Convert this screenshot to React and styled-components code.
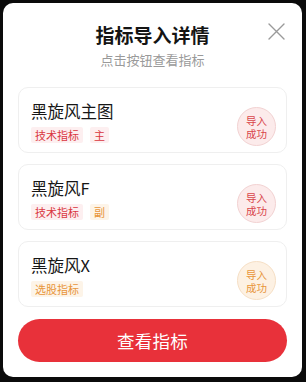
import React from "react";
import styled, { createGlobalStyle } from "styled-components";

const Global = createGlobalStyle`
  html, body { margin: 0; padding: 0; background: #0b0b0b; }
  body { font-family: "Noto Sans CJK SC", "Noto Sans", sans-serif; }
  #root { width: 306px; height: 382px; }
`;

const Screen = styled.div`
  width: 306px;
  height: 382px;
  box-sizing: border-box;
  padding: 3px 4px 5px 3px;
  background: #0b0b0b;
`;

const Modal = styled.div`
  position: relative;
  height: 100%;
  box-sizing: border-box;
  background: #ffffff;
  border-radius: 10px;
  padding: 20px 15px 15px 15px;
  display: flex;
  flex-direction: column;
`;

const Header = styled.div`
  display: flex;
  flex-direction: column;
  align-items: center;
  margin-bottom: 19px;
`;

const Title = styled.div`
  font-size: 19px;
  line-height: 24px;
  font-weight: 700;
  color: #141414;
`;

const Subtitle = styled.div`
  margin-top: 4px;
  font-size: 13px;
  line-height: 17px;
  color: #9a9a9a;
`;

const Close = styled.button`
  position: absolute;
  top: 19px;
  right: 17px;
  width: 18px;
  height: 18px;
  padding: 0;
  border: none;
  background: none;
  display: flex;
  align-items: center;
  justify-content: center;
`;

const List = styled.div`
  display: flex;
  flex-direction: column;
  gap: 11px;
  flex: 1;
`;

const Card = styled.div`
  height: 66px;
  box-sizing: border-box;
  border: 1px solid #efefef;
  border-radius: 10px;
  padding: 0 10px 0 12px;
  display: flex;
  justify-content: space-between;
`;

const Info = styled.div`
  display: flex;
  flex-direction: column;
  padding-top: 12px;
`;

const Name = styled.div`
  font-size: 16.5px;
  line-height: 22px;
  color: #161616;
`;

const Tags = styled.div`
  display: flex;
  gap: 7px;
  margin-top: 5px;
`;

const Tag = styled.span`
  font-size: 11px;
  line-height: 16px;
  padding: 0 4px;
  border-radius: 2px;
  color: ${(p) => (p.$tone === "orange" ? "#e8953a" : "#d9363e")};
  background: ${(p) => (p.$tone === "orange" ? "#fdf4e8" : "#fdeff0")};
`;

const Stamp = styled.div`
  margin-top: 19px;
  width: 39px;
  height: 39px;
  border-radius: 50%;
  box-sizing: border-box;
  display: flex;
  align-items: center;
  justify-content: center;
  color: ${(p) => (p.$tone === "orange" ? "#e8953a" : "#d9454a")};
  background: ${(p) => (p.$tone === "orange" ? "#fdf1e3" : "#fcebeb")};
  border: 1px solid ${(p) => (p.$tone === "orange" ? "#f6dfc5" : "#f2d2d2")};
`;

const StampText = styled.span`
  width: 22px;
  font-size: 10.5px;
  line-height: 13px;
  text-align: center;
  word-break: break-all;
`;

const Action = styled.button`
  margin-top: 11px;
  height: 43px;
  width: 100%;
  border: none;
  border-radius: 22px;
  background: #e8313a;
  color: #ffffff;
  font-family: "Noto Sans CJK SC", "Noto Sans", sans-serif;
  font-size: 17.5px;
  letter-spacing: 0.3px;
`;

const items = [
  { name: "黑旋风主图", tags: [{ t: "技术指标", c: "red" }, { t: "主", c: "red" }], tone: "red" },
  { name: "黑旋风F", tags: [{ t: "技术指标", c: "red" }, { t: "副", c: "orange" }], tone: "red" },
  { name: "黑旋风X", tags: [{ t: "选股指标", c: "orange" }], tone: "orange" },
];

export default function App() {
  return (
    <Screen>
      <Global />
      <Modal>
        <Header>
          <Title>指标导入详情</Title>
          <Subtitle>点击按钮查看指标</Subtitle>
        </Header>
        <Close aria-label="关闭">
          <svg width="17" height="17" viewBox="0 0 17 17">
            <path d="M1 1L16 16M16 1L1 16" stroke="#9a9a9a" strokeWidth="1.4" strokeLinecap="round" />
          </svg>
        </Close>
        <List>
          {items.map((it) => (
            <Card key={it.name}>
              <Info>
                <Name>{it.name}</Name>
                <Tags>
                  {it.tags.map((tg) => (
                    <Tag key={tg.t} $tone={tg.c}>{tg.t}</Tag>
                  ))}
                </Tags>
              </Info>
              <Stamp $tone={it.tone}>
                <StampText>导入成功</StampText>
              </Stamp>
            </Card>
          ))}
        </List>
        <Action>查看指标</Action>
      </Modal>
    </Screen>
  );
}
